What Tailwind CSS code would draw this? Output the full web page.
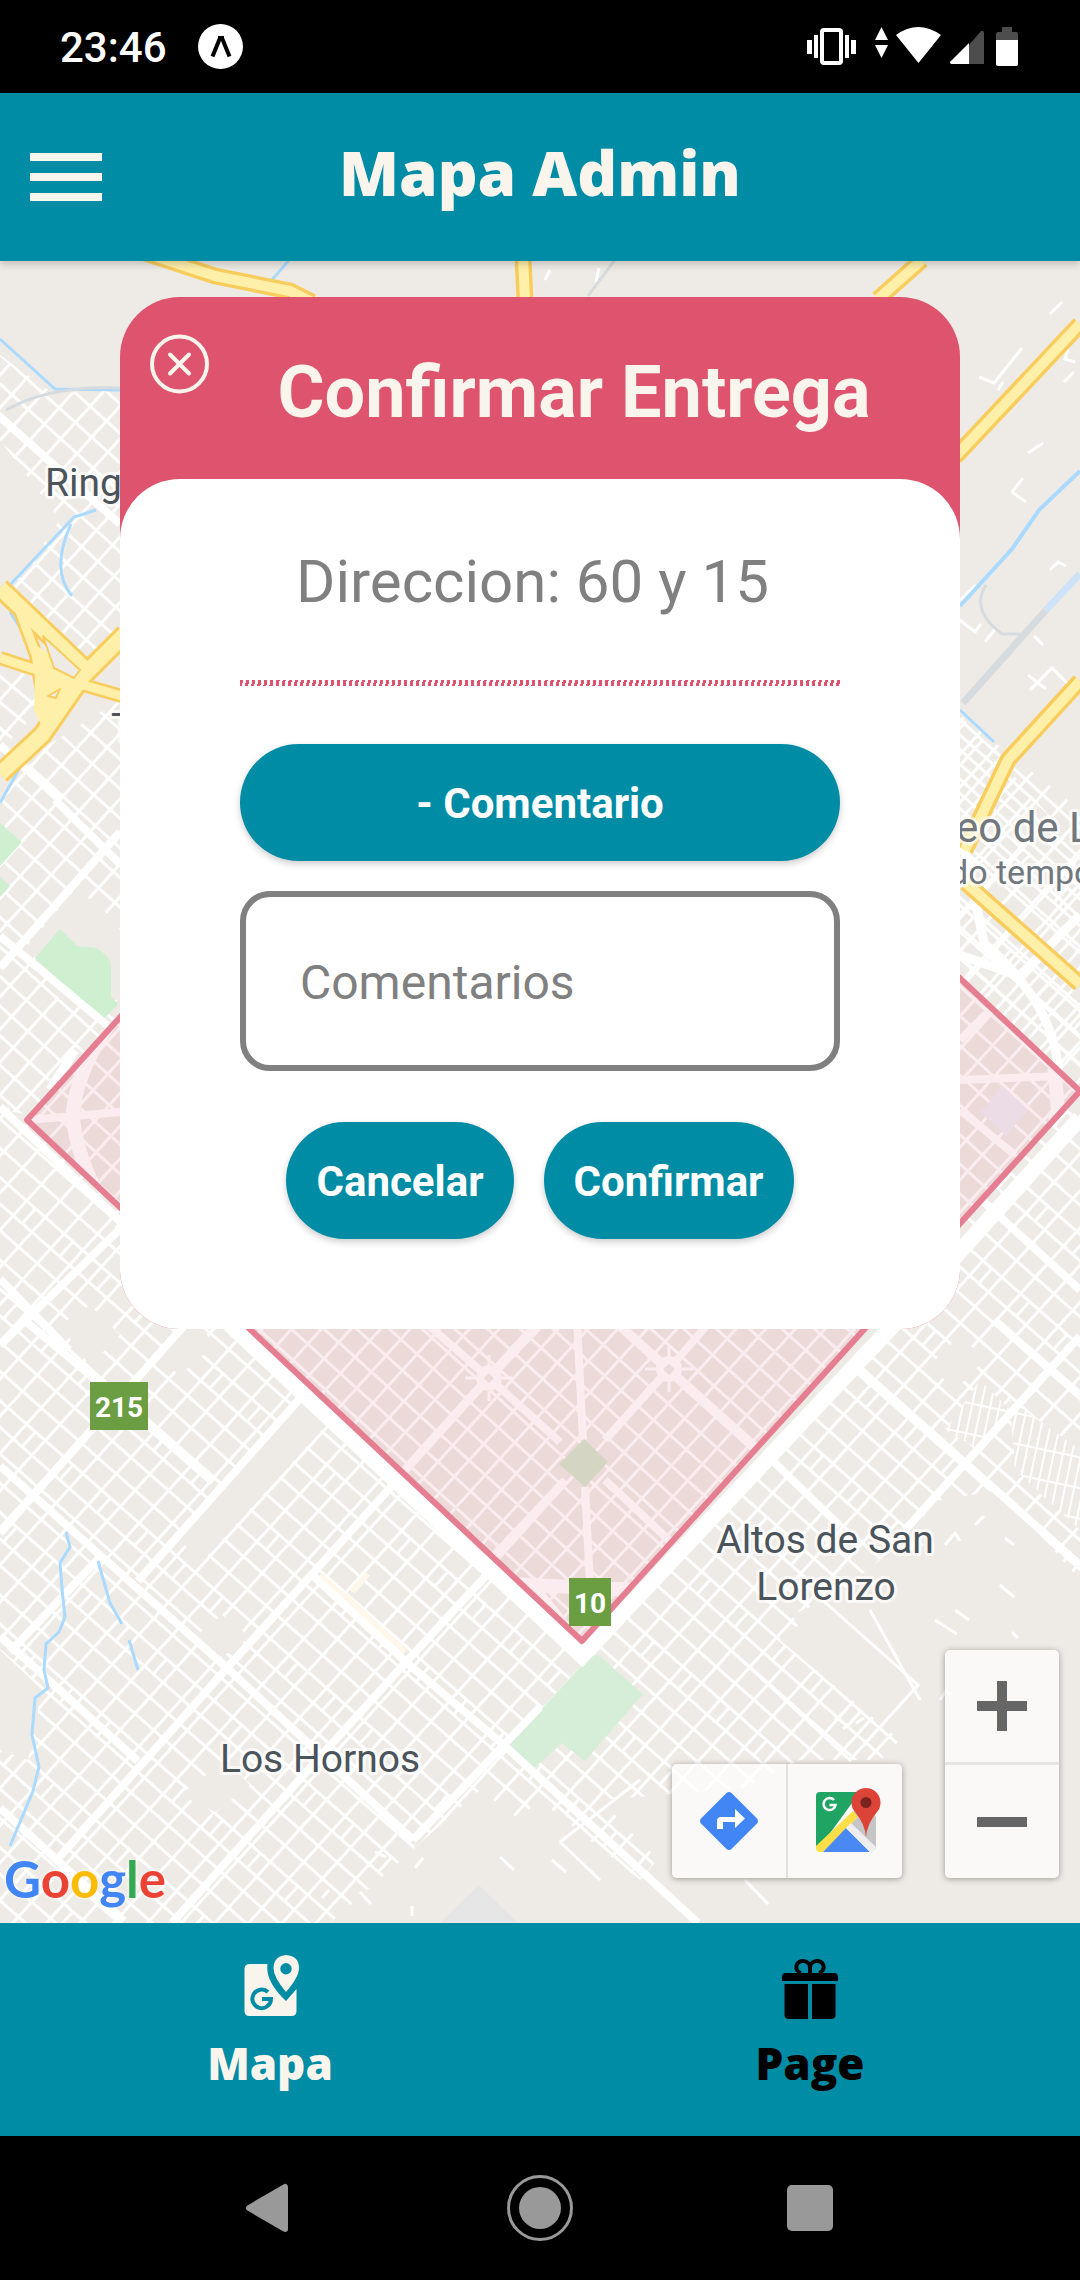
<!DOCTYPE html>
<html lang="es">
<head>
<meta charset="utf-8">
<meta name="viewport" content="width=device-width, initial-scale=1">
<title>Mapa Admin</title>
<script src="https://cdn.jsdelivr.net/npm/@tailwindcss/browser@4"></script>
</head>
<body class="flex min-h-screen flex-col bg-black font-['Roboto',sans-serif]">

<!-- Status bar -->
<div class="flex h-[93px] shrink-0 items-center justify-between bg-black pr-[62px] pl-[60px] text-white">
  <div class="flex items-center gap-[31px]">
    <span class="pt-[2px] text-[42px] leading-[48px] font-medium">23:46</span>
    <svg class="size-[45px]" viewBox="0 0 45 45" aria-hidden="true"><circle cx="22.500" cy="22.500" r="22.500" fill="#fff"/><path d="M14.500 32.500 22 14h2l7.500 18.500" fill="none" stroke="#000" stroke-width="4"/><path d="M20 12h6v4h-6z"/></svg>
  </div>
  <svg class="h-[40px] w-[211px]" viewBox="807 27 211 40" fill="#fff" aria-hidden="true">
    <rect x="822" y="30" width="19" height="33" rx="2" fill="none" stroke="#fff" stroke-width="4"/>
    <path d="M807 40h5v14h-5zM814 35h4v23h-4zM845 35h4v23h-4zM851 40h5v14h-5z"/>
    <path d="M881.500 27l6.500 13h-13zM881.500 58l6.500-13h-13z"/>
    <path d="M896 35q22-16 45 0l-22.500 28z"/>
    <path d="M984 33v31h-15V45l12-14q3-1 3 2z" fill="#4d4d4d"/><path d="M969 43v21h-18q-2-2 0-3z"/>
    <path d="M1002 27h10v5h4q2 0 2 2v7h-22v-7q0-2 2-2h4z" fill="#4d4d4d"/><path d="M996 40h22v24q0 2-2 2h-18q-2 0-2-2z"/>
  </svg>
</div>

<!-- App header -->
<header class="relative z-10 grid h-[168px] shrink-0 grid-cols-[132px_1fr_132px] items-center bg-[#008ca5] text-[#f9f5ec] shadow-[0_3px_8px_rgba(0,0,0,0.2)]">
  <button type="button" aria-label="Abrir menú" class="flex flex-col gap-[12px] pl-[30px]">
    <span class="h-[8px] w-[72px] bg-current"></span>
    <span class="h-[8px] w-[72px] bg-current"></span>
    <span class="h-[8px] w-[72px] bg-current"></span>
  </button>
  <h1 class="pb-[10px] text-center font-['Open_Sans',sans-serif] text-[62px] leading-[80px] font-extrabold">Mapa Admin</h1>
</header>

<main class="relative flex-1 overflow-hidden bg-[#eeebe6] pb-[360px]">
  <!-- City map -->
  <svg class="absolute inset-0 size-full" viewBox="0 261 1080 1662" preserveAspectRatio="xMidYMid slice" role="img" aria-label="Mapa de La Plata">
    <defs>
      <pattern id="g1" width="22" height="22" patternUnits="userSpaceOnUse" patternTransform="matrix(.74 .67 -.67 .74 8 4)"><path d="M0 1.500h22M1.500 0v22" stroke="#fff" stroke-width="3"/></pattern>
      <pattern id="g2" width="50" height="84" patternUnits="userSpaceOnUse" patternTransform="matrix(.75 .66 -.67 .74 0 0)"><path d="M0 1.500h50M0 23.500h50M0 45.500h50M0 65.500h50M1.500 0v84M26.500 0v84M38.500 45v20" stroke="#fff" stroke-width="3"/></pattern>
      <pattern id="g3" width="26" height="20" patternUnits="userSpaceOnUse" patternTransform="matrix(.77 .64 -.67 .74 0 0)"><path d="M0 1.500h26M1.500 0v20" stroke="#fff" stroke-width="3"/></pattern>
      <pattern id="g4" width="9" height="30" patternUnits="userSpaceOnUse" patternTransform="rotate(12)"><path d="M0 1h9M1 0v30" stroke="#fff" stroke-width="2"/></pattern>
      <clipPath id="zone"><path d="M27 1120 582 1641 1080 1091 525 570z"/></clipPath>
    </defs>
    <path d="M0 261h1080v1662H0z" fill="#eeebe6"/>
    <!-- street grids -->
    <path d="M55 395 100 388 120 392V640L92 662 10 590 60 520 0 440V355z" fill="url(#g1)"/>
    <path d="M120 700V1130L0 1110V800L40 750z" fill="url(#g1)"/>
    <path d="M0 660 35 680 40 710 0 750z" fill="url(#g3)"/>
    <path d="M0 1100 120 1210 582 1641 700 1540 900 1320 960 1240V1000L1080 1090V700L1080 850 960 715V1000L1080 1080V1580L1000 1490 940 1500 880 1560 780 1640 900 1740 880 1760 800 1760 700 1810 640 1880 540 1800 420 1900 330 1923H0z" fill="url(#g2)"/>
    <path d="M960 715 1080 810V1100L960 1000z" fill="url(#g1)"/>
    <!-- open land -->
    <path d="M1010 1400 1080 1450V1530L1015 1470zM945 1430 980 1380 1010 1410 980 1450z" fill="#eeebe6"/>
    <path d="M1010 1400 1080 1450V1530L1015 1470zM945 1430 980 1380 1010 1410 980 1450z" fill="url(#g4)"/>
    <g fill="#eeebe6">
      <path d="M75 890 100 905 120 930V1000L60 1000 28 945z"/><path d="M303 1397 336 1414 202 1562 178 1538z"/><path d="M195 1320 215 1345 180 1375 155 1357z"/><path d="M222 1615 250 1637 222 1657 195 1637z"/>
      <path d="M0 1650 42 1690 28 1760 0 1750z"/><path d="M180 1795 225 1760 250 1785 215 1812z"/><path d="M380 1440 400 1425 430 1452 405 1475z"/><path d="M60 1325 90 1305 120 1335 90 1365z"/><path d="M930 1365 960 1335 985 1360 955 1390z"/>
      <path d="M790 1615 880 1580 960 1500 1080 1600V1923H720L600 1800 720 1790 880 1770 930 1730z"/>
      <path d="M330 1923 480 1790 560 1850 640 1923z"/>
    </g>
    <g fill="none" stroke="#fff" stroke-width="3">
      <path d="M720 1640 850 1760 918 1685 800 1580M870 1610 920 1700M560 1842 640 1780M560 1842 600 1880M910 1550l8-10 5 6M945 1545l10-12 5 8M975 1525l9-9M1005 1538l9 7M1000 1585l14 12M1012 1632l6 6M940 1700l6-9 5 4M835 1720l10-9M843 1729l10-8M856 1723l8-5M745 1880 768 1904M552 1860l14 12M935 1620l22 14M955 1610l14 10M375 1852l11 5M415 1868l8-10M360 1892l11 12M322 1898l7-8M500 1857l14 13M412 1906v10"/>
      <path d="M1050 314l12-12M1064 382l10-10M1028 453l15-10M1023 478l-11 14 14 10M979 377l15 6 28-35M998 390l5-8M960 600l16-15M960 620l15 12 6-8M1034 636l9 9M1030 690l22-22 22 22M1028 675l18 14M985 642l11-14M1050 570l8-8 8 4M545 280l5-10M596 282l3-14M1075 362l-10-3 3-10"/>
    </g>
    <!-- parks -->
    <path d="M0 823 22 842 0 866zM0 877 10 886 0 897zM60 929 77 946 96 948Q108 955 111 964V996L118 1004 103 1020 35 958z" fill="#ceefd0"/>
    <path d="M598 1655 643 1694 585 1761 562 1743 530 1772 508 1746 590 1656z" fill="#d6eed8"/>
    <path d="M479 1885 440 1923H518z" fill="#e6e6e6"/>
    <path d="M320 1575 405 1652M352 1592 368 1574M345 1595 380 1630" stroke="#fff8ea" stroke-width="6" fill="none"/>
    <!-- avenues -->
    <g fill="none" stroke="#fff" stroke-width="8">
      <path d="M0 1466 227 1668 334 1767 413 1840M0 1636 138 1761M0 1808 124 1921M24 1320 90 1375 213 1482M310 1573 406 1662 506 1747 698 1923"/>
      <path d="M0 1533 189 1320M138 1581 303 1395M55 1862 227 1668 399 1478M172 1923 300 1779 406 1662 492 1569M413 1840 540 1707M10 1652 100 1557"/>
      <path d="M994 1320 1080 1395M857 1367 1080 1565M774 1462 840 1526M905 1530 1080 1336M960 1180 1080 1290"/>
      <path d="M55 800 120 864M0 968 120 832M0 936 120 1036M0 1107 120 1221M0 1279 69 1350M0 1345 120 1229M0 417 120 524M0 745 60 800"/>
    </g>
    <path d="M120 1221 582 1656 900 1318 1080 1118" fill="none" stroke="#fff" stroke-width="16"/>
    <path d="M965 850 984 943Q1050 1000 1058 1064V1090M960 955 1019 976 1080 915M75 1050 50 1090" fill="none" stroke="#fff" stroke-width="9"/>
    <!-- avenues inside the zone -->
    <g clip-path="url(#zone)">
      <path d="M27 1120 582 1641 1080 1091 525 570z" fill="#eeebe6"/>
      <path d="M27 1120 582 1641 1080 1091 525 570z" fill="url(#g1)"/>
      <g fill="none" stroke="#fff" stroke-width="8">
        <path d="M577 1320 583 1440M585 1487 592 1625M420 1318 489 1378 560 1442M605 1480 690 1560M489 1378 400 1476M489 1378 545 1320M669 1369 605 1440M565 1480 490 1560M669 1369 765 1455M669 1369 620 1325M669 1369 720 1310M27 1120 120 1112M960 1080 1060 1076M960 1110 1015 1155M960 1040 1000 1000"/>
        <path d="M120 1010Q80 1060 73 1110 72 1150 110 1220M1080 1070 1055 1075 1058 1110 1050 1140M582 1650 530 1585 640 1590" stroke-width="14"/>
        <circle cx="489" cy="1378" r="9"/><circle cx="669" cy="1369" r="9"/>
        <path d="M465 1378h48M489 1355v46M645 1369h48M669 1346v46" stroke-width="3"/>
      </g>
      <path d="M489 1373 494 1378 489 1383 484 1378zM669 1364 675 1369 669 1375 663 1369z" fill="#eeebe6"/>
      <path d="M584 1439 608 1462 585 1487 559 1464z" fill="#d5e6cf"/>
      <path d="M1003 1086 1028 1110 1006 1136 980 1112z" fill="#efeef4"/>
    </g>
    <!-- water -->
    <g fill="none" stroke="#aadaff" stroke-width="3">
      <path d="M0 339 55 389 120 390M96 510 74 517 10 585M71 524Q50 570 72 596M289 260 272 280M38 735 0 803M960 710 994 742M10 612 38 655"/>
      <path d="M1080 471 1039 510 1012 549 960 606" stroke-width="4"/>
      <path d="M66 1532 70 1547 60 1563 62 1589 65 1617 59 1632 46 1644 44 1670 48 1688 35 1698 32 1735 39 1767 33 1791 10 1846M98 1561 110 1603 122 1624M129 1640 138 1670"/>
      <path d="M6 410Q50 385 120 388M614 261 588 296M986 585Q970 610 1002 634H1020" stroke="#d5dbde"/>
      <path d="M1046 610 963 703" stroke="#d5dbde" stroke-width="7"/><path d="M1080 574 1046 610" stroke="#cfe3f8" stroke-width="7"/>
    </g>
    <!-- motorways -->
    <g fill="none" stroke-linejoin="round">
      <g stroke="#f8cd5d">
        <path d="M145 253 215 276 290 291 312 302M523 258 525 300M922 260 878 299M1080 324 955 457M1080 681 1008 760 965 850M966 883 1080 984" stroke-width="17"/>
        <path d="M0 588 88 672M125 634 83 676 42 735 0 774" stroke-width="21"/>
        <path d="M18 606 36 655 45 710M0 658 80 684 125 697" stroke-width="14"/>
      </g>
      <path d="M36 645 85 680 60 700 46 735 34 710z" fill="#fff0a9"/>
      <g stroke="#fff0a9">
        <path d="M145 253 215 276 290 291 312 302M523 258 525 300M922 260 878 299M1080 324 955 457M1080 681 1008 760 965 850M966 883 1080 984" stroke-width="10"/>
        <path d="M0 588 88 672M125 634 83 676 42 735 0 774" stroke-width="15"/>
        <path d="M18 606 36 655 45 710M0 658 80 684 125 697" stroke-width="9"/>
      </g>
      <path d="M43 636 80 670 74 678 54 668z" fill="#eeebe6" stroke="#f8cd5d" stroke-width="2"/>
      <path d="M48 696 60 689 56 698z" fill="#eeebe6" stroke="#f8cd5d" stroke-width="2"/>
    </g>
    <!-- delivery zone -->
    <path d="M27 1120 582 1641 1080 1091 525 570z" fill="#de536d" fill-opacity=".11"/>
    <path d="M27 1120 582 1641 1080 1091 525 570z" fill="none" stroke="#e67e92" stroke-width="6" stroke-linejoin="round"/>
    <!-- place names -->
    <g font-family="Roboto, sans-serif" font-size="39" fill="#4b535b" stroke="#fff" stroke-opacity=".7" stroke-width="6" paint-order="stroke" stroke-linejoin="round">
      <text x="45" y="496">Ring</text>
      <text x="111" y="741">T</text>
      <text x="825" y="1553" text-anchor="middle">Altos de San</text>
      <text x="826" y="1600" text-anchor="middle">Lorenzo</text>
      <text x="320" y="1772" text-anchor="middle">Los Hornos</text>
      <text x="956" y="842" font-size="42" fill="#70777d">eo de L</text>
      <text x="949" y="884" font-size="34" fill="#70777d">do tempo</text>
    </g>
    <!-- route shields -->
    <path d="M90 1382h58v48H90zM569 1578h42v48h-42z" fill="#6b9e43"/>
    <g font-family="Roboto, sans-serif" font-size="28" font-weight="700" fill="#fff" text-anchor="middle">
      <text x="119" y="1417">215</text><text x="590" y="1613">10</text>
    </g>
  </svg>

  <!-- Delivery confirmation dialog -->
  <section role="dialog" aria-labelledby="dialog-title" class="relative mx-[120px] mt-[36px] rounded-[60px] bg-[#de536d]">
    <div class="flex h-[182px] items-start pl-[30px]">
      <button type="button" aria-label="Cerrar" class="mt-[37px] size-[60px] shrink-0">
        <svg viewBox="0 0 60 60" fill="none" stroke="#f9f5ec" stroke-width="4" stroke-linecap="round" aria-hidden="true"><circle cx="29.500" cy="30" r="27.500"/><path d="M20 20.500 39 39.500M39 20.500 20 39.500" stroke-width="4"/></svg>
      </button>
      <h2 id="dialog-title" class="flex-1 pt-[54px] pr-[22px] text-center text-[72px] leading-[84px] font-bold text-[#f9f5ec]">Confirmar Entrega</h2>
    </div>
    <form class="flex flex-col items-stretch rounded-[60px] bg-white px-[120px] pt-[68px] pb-[90px]">
      <p class="pr-[15px] text-center text-[60px] leading-[70px] text-[#808080]">Direccion: 60 y 15</p>
      <div class="mt-[63px] h-[6px] bg-[repeating-linear-gradient(100deg,#de536d_0px,#de536d_3px,#ffffff_3px,#ffffff_6px)]"></div>
      <button type="button" class="mt-[58px] h-[117px] rounded-full bg-[#008ca5] pt-[2px] text-[42px] font-bold text-white shadow-[0_3px_7px_rgba(0,0,0,0.2)]">- Comentario</button>
      <input type="text" aria-label="Comentarios" placeholder="Comentarios" class="mt-[30px] h-[180px] w-full rounded-[30px] border-6 border-[#808080] bg-white px-[54px] pt-[2px] text-[48px] text-[#808080] placeholder:text-[#808080] placeholder:opacity-100">
      <div class="mt-[51px] flex justify-center gap-[30px]">
        <button type="button" class="h-[117px] rounded-full bg-[#008ca5] px-[30px] pt-[2px] text-[42px] font-bold text-white shadow-[0_3px_7px_rgba(0,0,0,0.2)]">Cancelar</button>
        <button type="submit" class="h-[117px] rounded-full bg-[#008ca5] px-[30px] pt-[2px] text-[42px] font-bold text-white shadow-[0_3px_7px_rgba(0,0,0,0.2)]">Confirmar</button>
      </div>
    </form>
  </section>

  <!-- Map attribution and controls -->
  <div class="absolute bottom-[12px] left-[4px] font-['Lato',sans-serif] text-[51px] leading-[64px] font-bold [text-shadow:0_0_4px_white]" aria-label="Google"><span class="text-[#4285f4]">G</span><span class="text-[#ea4335]">o</span><span class="text-[#fbbc05]">o</span><span class="text-[#4285f4]">g</span><span class="text-[#34a853]">l</span><span class="text-[#ea4335]">e</span></div>
  <div class="absolute right-[21px] bottom-[45px] flex items-end gap-[43px]">
    <div class="flex rounded-[5px] bg-white/70 shadow-[0_1px_6px_rgba(0,0,0,0.35)]">
      <button type="button" aria-label="Cómo llegar" class="flex h-[114px] w-[116px] items-center justify-center border-r-2 border-[#e2e1df]">
        <svg class="size-[58px]" viewBox="0 0 58 58" aria-hidden="true"><path d="M26.500 1Q29-1 31.500 1L57 26.500Q59 29 57 31.500L31.500 57Q29 59 26.500 57L1 31.500Q-1 29 1 26.500z" fill="#4285f4"/><path d="M17 37V29q0-4 4-4h14v-8l10 9.500L35 36v-6H23v7z" fill="#fff"/></svg>
      </button>
      <button type="button" aria-label="Abrir en Google Maps" class="flex h-[114px] w-[114px] items-center justify-center">
        <svg class="h-[66px] w-[72px]" viewBox="-6 1 72 66" aria-hidden="true">
          <path d="M5 5h40L5 60Q1 60 1 60V9Q1 5 5 5z" fill="#1fa463"/><path d="M61 30V62L30 36 48 14z" fill="#c6c6c6"/>
          <path d="M38 24 43 30 8 65H5Q1 65 1 61V59z" fill="#ffde48"/><path d="M31 41 55 65H8z" fill="#4a89f3"/><path d="M36 36 61 60Q61 65 55 65L31 41z" fill="#eee"/>
          <path d="M51 50Q50 37 40 25A14.500 14.500 0 1 1 62 25Q52 37 51 50z" fill="#db4437"/><circle cx="51" cy="15.500" r="5.500" fill="#7b231e"/>
          <path d="M19 13A6 6 0 1 0 20.500 18H14.500" fill="none" stroke="#fff" stroke-width="2.500"/>
        </svg>
      </button>
    </div>
    <div class="rounded-[5px] bg-white/70 shadow-[0_1px_6px_rgba(0,0,0,0.35)]">
      <button type="button" aria-label="Acercar" class="flex h-[115px] w-[114px] items-center justify-center border-b-3 border-[#e6e5e3]"><svg class="size-[50px]" viewBox="0 0 50 50" aria-hidden="true"><path d="M20 0h10v20h20v10H30v20H20V30H0V20h20z" fill="#666"/></svg></button>
      <button type="button" aria-label="Alejar" class="flex h-[113px] w-[114px] items-center justify-center"><svg class="h-[10px] w-[50px]" viewBox="0 0 50 10" aria-hidden="true"><path d="M0 0h50v10H0z" fill="#666"/></svg></button>
    </div>
  </div>
</main>

<!-- Tab bar -->
<nav class="grid h-[213px] shrink-0 grid-cols-2 bg-[#008ca5] font-['Open_Sans',sans-serif] text-[44px] leading-[60px] font-extrabold text-[#f9f5ec]">
  <a href="#mapa" class="flex flex-col items-center gap-[14px] pt-[30px]">
    <svg class="h-[66px] w-[58px]" viewBox="241 1953 58 66" aria-hidden="true">
      <path fill="currentColor" d="M250 1964H267.500Q265 1981 286 2001L296.500 1989V2011Q296.500 2016 291.500 2016H249.500Q244.500 2016 244.500 2011V1969Q244.500 1964 250 1964z"/>
      <path fill="currentColor" fill-rule="evenodd" d="M286 1955Q299 1956 299 1968 299 1977 286 1992 273.500 1977 273.500 1968 274 1956 286 1955zM286 1963A5.700 5.700 0 1 0 286 1974.400 5.700 5.700 0 1 0 286 1963z"/>
      <path d="M268 1992A9.300 9.300 0 1 0 271 1999H262" fill="none" stroke="#008ca5" stroke-width="4"/>
    </svg>
    <span>Mapa</span>
  </a>
  <a href="#page" class="flex flex-col items-center gap-[14px] pt-[30px] text-black">
    <svg class="h-[66px] w-[58px]" viewBox="781 1953 58 66" aria-hidden="true">
      <path d="M782 1981V1977Q782 1973 786 1973H834Q838 1973 838 1977V1981zM784.500 1984H808V2019H789Q784.500 2019 784.500 2015zM812 1984H835.500V2015Q835.500 2019 831 2019H812z"/>
      <path d="M810 1973V1968C810 1964 807 1961 803 1961 795 1961 794 1971 801 1973M810 1973V1968C810 1964 813 1961 817 1961 825 1961 826 1971 819 1973" fill="none" stroke="#000" stroke-width="4"/>
    </svg>
    <span>Page</span>
  </a>
</nav>

<!-- System navigation -->
<div class="flex h-[144px] shrink-0 items-center justify-center gap-[204px] bg-black">
  <button type="button" aria-label="Atrás"><svg class="size-[66px]" viewBox="0 0 66 66" aria-hidden="true"><path d="M48 12v42L12 33z" fill="#999" stroke="#999" stroke-width="6" stroke-linejoin="round"/></svg></button>
  <button type="button" aria-label="Inicio"><svg class="size-[66px]" viewBox="0 0 66 66" aria-hidden="true"><circle cx="33" cy="33" r="31.500" fill="none" stroke="#999" stroke-width="3"/><circle cx="33" cy="33" r="21" fill="#999"/></svg></button>
  <button type="button" aria-label="Recientes"><svg class="size-[66px]" viewBox="0 0 66 66" aria-hidden="true"><rect x="10" y="10" width="46" height="46" rx="5" fill="#999"/></svg></button>
</div>
</body>
</html>
